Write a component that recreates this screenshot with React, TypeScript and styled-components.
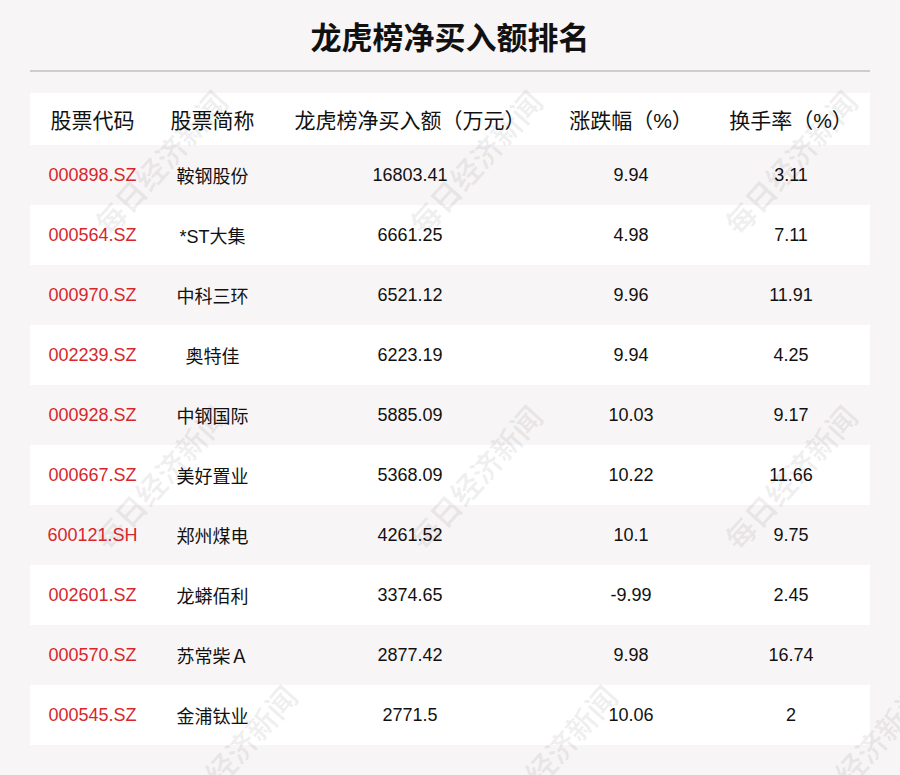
import React from "react";
import styled, { createGlobalStyle } from "styled-components";

const Global = createGlobalStyle`
  body { margin: 0; background: #f8f5f6; font-family: "Liberation Sans", "Noto Sans CJK SC", sans-serif; }
`;

const Page = styled.div`
  position: relative;
  width: 900px;
  height: 775px;
  overflow: hidden;
  padding: 0 30px;
  box-sizing: border-box;
`;

const Title = styled.h1`
  margin: 0;
  height: 70px;
  line-height: 78px;
  text-align: center;
  font-size: 31px;
  font-weight: bold;
  color: #111;
  border-bottom: 2px solid #cfcccd;
`;

const Table = styled.div`
  margin-top: 21px;
`;

const Row = styled.div<{ $white?: boolean; $head?: boolean }>`
  display: grid;
  grid-template-columns: 125px 115px 280px 162px 158px;
  height: ${({ $head }) => ($head ? "52px" : "60px")};
  align-items: center;
  background: ${({ $white }) => ($white ? "#ffffff" : "transparent")};
  font-size: ${({ $head }) => ($head ? "21px" : "18px")};
  color: #111;
`;

const Cell = styled.div<{ $red?: boolean }>`
  text-align: center;
  white-space: nowrap;
  color: ${({ $red }) => ($red ? "#d9262b" : "inherit")};
`;

const Mark = styled.div`
  position: absolute;
  font-size: 30px;
  font-weight: bold;
  color: rgba(0, 0, 0, 0.06);
  transform: rotate(-48deg);
  pointer-events: none;
  white-space: nowrap;
`;

const rows = [
  ["000898.SZ", "鞍钢股份", "16803.41", "9.94", "3.11"],
  ["000564.SZ", "*ST大集", "6661.25", "4.98", "7.11"],
  ["000970.SZ", "中科三环", "6521.12", "9.96", "11.91"],
  ["002239.SZ", "奥特佳", "6223.19", "9.94", "4.25"],
  ["000928.SZ", "中钢国际", "5885.09", "10.03", "9.17"],
  ["000667.SZ", "美好置业", "5368.09", "10.22", "11.66"],
  ["600121.SH", "郑州煤电", "4261.52", "10.1", "9.75"],
  ["002601.SZ", "龙蟒佰利", "3374.65", "-9.99", "2.45"],
  ["000570.SZ", "苏常柴Ａ", "2877.42", "9.98", "16.74"],
  ["000545.SZ", "金浦钛业", "2771.5", "10.06", "2"],
];

const marks = [
  [70, 140], [385, 140], [700, 140],
  [70, 455], [385, 455], [700, 455],
  [140, 735], [460, 735], [770, 735],
];

export default function App() {
  return (
    <Page>
      <Global />
      <Title>龙虎榜净买入额排名</Title>
      <Table>
        <Row $head $white>
          <Cell>股票代码</Cell>
          <Cell>股票简称</Cell>
          <Cell>龙虎榜净买入额（万元）</Cell>
          <Cell>涨跌幅（%）</Cell>
          <Cell>换手率（%）</Cell>
        </Row>
        {rows.map((r, i) => (
          <Row key={r[0]} $white={i % 2 === 1}>
            <Cell $red>{r[0]}</Cell>
            <Cell>{r[1]}</Cell>
            <Cell>{r[2]}</Cell>
            <Cell>{r[3]}</Cell>
            <Cell>{r[4]}</Cell>
          </Row>
        ))}
      </Table>
      {marks.map(([x, y], i) => (
        <Mark key={i} style={{ left: x, top: y }}>每日经济新闻</Mark>
      ))}
    </Page>
  );
}
